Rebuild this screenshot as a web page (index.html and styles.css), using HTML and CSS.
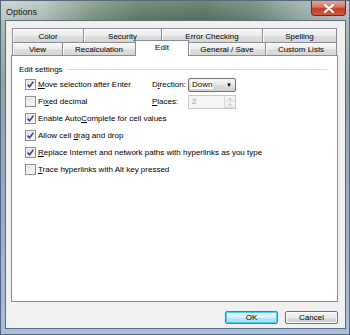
FILE: index.html
```html
<!DOCTYPE html>
<html lang="en">
<head>
    <meta charset="UTF-8">
    <title>Options</title>
    <link rel="stylesheet" href="styles.css">
</head>
<body>
    <section class="window">
        <header class="titlebar">
            <span class="title">Options</span>
            <span class="close">
                <svg width="12" height="9" viewBox="0 0 12 9"><path d="M2 1 L10 8 M10 1 L2 8" stroke="#fff" stroke-width="2.2" stroke-linecap="round"/></svg>
            </span>
        </header>

        <main class="client">
            <!-- two rows of tabs, the front row holds the open one -->
            <div class="tabs">
                <div class="tab-row back">
                    <span class="tab">Color</span>
                    <span class="tab">Security</span>
                    <span class="tab">Error Checking</span>
                    <span class="tab last">Spelling</span>
                </div>
                <div class="tab-row front">
                    <span class="tab">View</span>
                    <span class="tab">Recalculation</span>
                    <span class="tab active">Edit</span>
                    <span class="tab">General / Save</span>
                    <span class="tab last">Custom Lists</span>
                </div>
            </div>

            <section class="panel">
                <div class="group-title">Edit settings</div>
                <div class="options">
                    <div class="row">
                        <label class="check wide"><span class="box checked"></span><span><u>M</u>ove selection after Enter</span></label>
                        <span class="field-label">D<u>i</u>rection:</span>
                        <span class="dropdown"><span class="value">Down</span><span class="arrow">&#9660;</span></span>
                    </div>
                    <div class="row">
                        <label class="check wide"><span class="box"></span><span>Fi<u>x</u>ed decimal</span></label>
                        <span class="field-label"><u>P</u>laces:</span>
                        <span class="spinner"><span class="value">2</span><span class="spin"><span>&#9650;</span><span>&#9660;</span></span></span>
                    </div>
                    <div class="row">
                        <label class="check"><span class="box checked"></span><span>Enable Auto<u>C</u>omplete for cell values</span></label>
                    </div>
                    <div class="row">
                        <label class="check"><span class="box checked"></span><span>Allow cell <u>d</u>rag and drop</span></label>
                    </div>
                    <div class="row">
                        <label class="check"><span class="box checked"></span><span><u>R</u>eplace Internet and network paths with hyperlinks as you type</span></label>
                    </div>
                    <div class="row">
                        <label class="check"><span class="box"></span><span><u>T</u>race hyperlinks with Alt key pressed</span></label>
                    </div>
                </div>
            </section>

            <div class="buttons">
                <button type="button" class="btn default">OK</button>
                <button type="button" class="btn">Cancel</button>
            </div>
        </main>
    </section>
</body>
</html>
```

FILE: styles.css
```css
/* Global */
body {
    margin: 0;
    font-family: "Liberation Sans", Arial, sans-serif;
    font-size: 8px;
    color: #000;
    background: #fff;
}

/* Window frame */
.window {
    width: 350px;
    height: 335px;
    box-sizing: border-box;
    border: 1px solid #56687a;
    display: flex;
    flex-direction: column;
    background: linear-gradient(to bottom, #b5c4c2 0%, #8fa5a4 25%, #97add0 65%, #a8bfe6 100%);
}

.titlebar {
    height: 19px;
    display: flex;
    align-items: flex-start;
    background:
        linear-gradient(to bottom, rgba(255, 255, 255, 0.15), rgba(0, 0, 0, 0.05)),
        linear-gradient(90deg, #c7d1cf 0%, #b3c3bd 12%, #7f9985 26%, #5f7d68 40%, #567462 58%, #6a8677 72%, #98adab 86%, #b9c6c9 100%);
}

.title {
    font-size: 9px;
    color: #111;
    padding: 6px 0 0 5px;
}

.close {
    margin-left: auto;
    margin-right: 3px;
    width: 35px;
    height: 15px;
    box-sizing: border-box;
    border: 1px solid #6b2a20;
    border-top: none;
    border-radius: 0 0 4px 4px;
    background: linear-gradient(to bottom, #e8a596 0%, #d56f5a 45%, #c2402a 55%, #cf5a3d 100%);
    display: flex;
    align-items: center;
    justify-content: center;
}

/* Client area */
.client {
    margin: 0 3px 5px 4px;
    flex: 1;
    border: 1px solid #5f6b78;
    background: #f0f0f0;
    padding: 7px 7px 0 5px;
    display: flex;
    flex-direction: column;
}

/* Tabs */
.tabs {
    margin-left: 1px;
}

.tab-row {
    display: grid;
}

.tab-row.back {
    height: 14px;
    grid-template-columns: 71px 78px 101px 75px;
}

.tab-row.front {
    height: 13px;
    grid-template-columns: 50px 73px 53px 77px 72px;
}

.tab {
    box-sizing: border-box;
    border: 1px solid #898c95;
    border-right: none;
    border-bottom: none;
    background: linear-gradient(to bottom, #f6f6f6 0%, #ececec 50%, #dedede 52%, #d7d7d7 100%);
    box-shadow: inset 1px 1px 0 #fff;
    display: flex;
    align-items: center;
    justify-content: center;
    padding-top: 1px;
}

.tab.last {
    border-right: 1px solid #898c95;
}

.tab.active {
    position: relative;
    z-index: 1;
    margin: -2px -1px -1px 0;
    border-right: 1px solid #898c95;
    background: #fff;
    box-shadow: none;
    padding-bottom: 3px;
}

/* Panel */
.panel {
    height: 247px;
    box-sizing: border-box;
    border: 1px solid #898c95;
    background: #fff;
    padding: 8px 10px 0 7px;
}

.group-title {
    height: 10px;
    display: flex;
    align-items: center;
    gap: 4px;
}

.group-title::after {
    content: "";
    flex: 1;
    border-top: 1px solid #d5dfe5;
}

.options {
    margin: 2px 0 0 6px;
}

.row {
    height: 17px;
    display: flex;
    align-items: center;
}

.check {
    display: flex;
    align-items: center;
    gap: 2px;
}

.check.wide {
    width: 127px;
}

.box {
    width: 11px;
    height: 11px;
    box-sizing: border-box;
    border: 1px solid #8e8f8f;
    background: linear-gradient(135deg, #d8d8d8 0%, #eeeeee 50%, #fdfdfd 100%);
    box-shadow: inset 0 0 0 1px #f4f4f4;
}

.box.checked {
    background:
        url("data:image/svg+xml,%3Csvg xmlns='http://www.w3.org/2000/svg' width='9' height='9' viewBox='0 0 9 9'%3E%3Cpath d='M1.6 4.6 L3.6 6.8 L7.4 1.6' fill='none' stroke='%2332468a' stroke-width='1.6'/%3E%3C/svg%3E") center / 9px 9px no-repeat,
        linear-gradient(135deg, #d8d8d8 0%, #eeeeee 50%, #fdfdfd 100%);
}

.field-label {
    width: 36px;
}

.dropdown,
.spinner {
    width: 48px;
    height: 14px;
    box-sizing: border-box;
    display: flex;
    align-items: center;
}

.dropdown {
    border: 1px solid #707070;
    border-radius: 2px;
    background: linear-gradient(to bottom, #f4f4f4 0%, #eaeaea 50%, #dddddd 52%, #d2d2d2 100%);
    justify-content: space-between;
    padding: 0 3px 0 2px;
}

.dropdown .value {
    background: #fff;
    padding: 0 1px;
}

.arrow {
    font-size: 6px;
}

.spinner {
    border: 1px solid #c8c8c8;
    background: #f4f4f4;
    color: #9a9a9a;
    justify-content: space-between;
    padding-left: 3px;
}

.spin {
    width: 10px;
    height: 100%;
    display: flex;
    flex-direction: column;
    border-left: 1px solid #dadada;
    font-size: 4px;
    color: #b0b0b0;
}

.spin span {
    flex: 1;
    display: flex;
    align-items: center;
    justify-content: center;
    background: linear-gradient(to bottom, #f7f7f7, #ececec);
    border-bottom: 1px solid #e0e0e0;
}

/* Dialog buttons */
.buttons {
    margin-top: 9px;
    display: flex;
    justify-content: flex-end;
    gap: 7px;
}

.btn {
    width: 53px;
    height: 13px;
    padding: 0;
    font-family: inherit;
    font-size: 8px;
    color: #000;
    border: 1px solid #707070;
    border-radius: 2px;
    background: linear-gradient(to bottom, #f2f2f2 0%, #ebebeb 50%, #dddddd 52%, #cfcfcf 100%);
    box-shadow: inset 0 0 0 1px #fbfbfb;
}

.btn.default {
    border-color: #3c7fb1;
    background: linear-gradient(to bottom, #eaf6fd 0%, #d9f0fc 50%, #bee6fd 52%, #a7d9f5 100%);
    box-shadow: inset 0 0 0 1px #48d0f9;
}
```
